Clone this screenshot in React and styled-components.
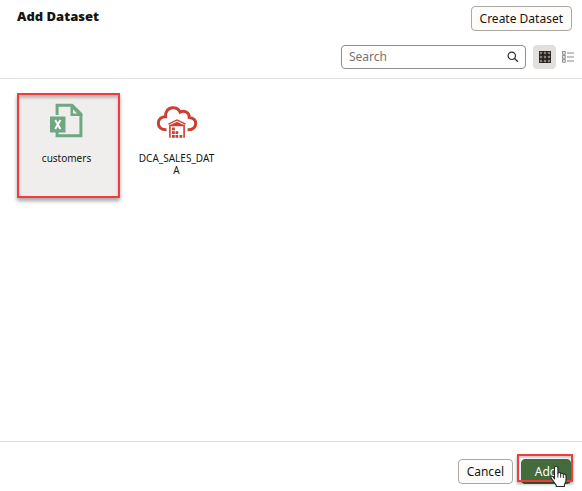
import React, { useState } from "react";
import styled, { createGlobalStyle } from "styled-components";

const GlobalStyle = createGlobalStyle`
  * { box-sizing: border-box; }
  body { margin: 0; background: #fff; }
  body, button, input {
    font-family: "Noto Sans", "Open Sans", sans-serif;
    font-size: 12px;
    line-height: 16px;
    color: #161513;
  }
`;

const Dialog = styled.main`
  display: flex;
  flex-direction: column;
  min-height: 100vh;
`;

const Header = styled.header`
  display: flex;
  justify-content: space-between;
  align-items: flex-start;
  padding: 6px 10px 0 17px;
`;

const Title = styled.h1`
  margin: 1px 0 0;
  font-size: 13px;
  line-height: 18px;
  font-weight: 900;
`;

const Button = styled.button`
  height: 25px;
  padding: 0 8px;
  border: 1px solid ${(p) => (p.$primary ? "#436b3b" : "#aba8a3")};
  border-radius: 4px;
  background: ${(p) => (p.$primary ? "#436b3b" : "#fdfcfb")};
  color: ${(p) => (p.$primary ? "#fff" : "#161513")};
  min-width: ${(p) => (p.$primary ? "50px" : "0")};
  white-space: nowrap;
  cursor: pointer;
`;

const Toolbar = styled.div`
  display: flex;
  justify-content: flex-end;
  align-items: center;
  padding: 14px 3px 9px 17px;
  border-bottom: 1px solid #e4e2e0;
`;

const SearchField = styled.label`
  display: flex;
  align-items: center;
  flex: 0 1 185px;
  min-width: 0;
  height: 24px;
  padding: 0 6px 0 7px;
  margin-right: 7px;
  border: 1px solid #908e8b;
  border-radius: 4px;
`;

const SearchInput = styled.input`
  flex: 1;
  min-width: 0;
  padding: 0;
  border: 0;
  outline: 0;
  background: transparent;
  &::placeholder { color: #77736f; opacity: 1; }
`;

const ViewToggle = styled.button`
  display: grid;
  place-items: center;
  width: 23px;
  height: 24px;
  padding: 0;
  border: 0;
  border-radius: 4px;
  background: ${(p) => (p["aria-pressed"] ? "#e2dfdc" : "transparent")};
  cursor: pointer;
`;

const Datasets = styled.section`
  display: flex;
  flex-wrap: wrap;
  align-items: flex-start;
  gap: 7px;
  flex: 1;
  padding: 14px 17px;
`;

const Tile = styled.button`
  display: flex;
  flex-direction: column;
  align-items: center;
  width: 103px;
  height: 105px;
  padding: 8px 10px 0 6px;
  border: 2px solid ${(p) => (p.$marked ? "#f03c3c" : "transparent")};
  background: ${(p) => (p.$marked ? "#efeeec" : "transparent")};
  box-shadow: ${(p) =>
    p.$marked ? "0 3px 4px rgba(0,0,0,.35), inset 0 3px 3px rgba(0,0,0,.22)" : "none"};
  cursor: pointer;
`;

const TileName = styled.span`
  width: 81px;
  margin-top: 13px;
  font-size: 10px;
  line-height: 12px;
  text-align: center;
  overflow-wrap: anywhere;
`;

const Footer = styled.footer`
  display: flex;
  justify-content: flex-end;
  align-items: flex-start;
  gap: 8px;
  padding: 17px 11px 7px;
  border-top: 1px solid #dedcda;
`;

const MarkedAction = styled.div`
  position: relative;
`;

const Highlight = styled.span`
  position: absolute;
  inset: -5px -2px 2px -4px;
  border: 2px solid #f03c3c;
  box-shadow: 0 2px 3px rgba(0, 0, 0, 0.35), inset 0 2px 2px rgba(0, 0, 0, 0.2);
  pointer-events: none;
`;

const Pointer = styled.svg`
  position: absolute;
  left: 29px;
  top: 6px;
  pointer-events: none;
`;

const SearchIcon = () => (
  <svg width="12" height="12" viewBox="0 0 12 12" fill="none" stroke="#302e2b" aria-hidden="true">
    <circle cx="4.8" cy="4.8" r="3.7" strokeWidth="1.2" />
    <path d="M7.5 7.5l3.4 3.2" strokeWidth="1.3" />
  </svg>
);

const GridIcon = () => (
  <svg width="12" height="12" viewBox="0 0 12 12" aria-hidden="true">
    {[0, 4, 8].map((y) =>
      [0, 4, 8].map((x) => (
        <g key={`${x}-${y}`}>
          <rect x={x + 0.4} y={y + 0.4} width="3.2" height="3.2" fill="none" stroke="#24211f" strokeWidth="1" />
          <rect x={x + 1} y={y + 1} width="2" height="2" fill="#85817c" />
        </g>
      ))
    )}
  </svg>
);

const ListIcon = () => (
  <svg width="12" height="12" viewBox="0 0 12 12" fill="none" stroke="#8b8885" aria-hidden="true">
    {[0, 4, 8].map((y) => (
      <g key={y}>
        <rect x="0.6" y={y + 0.6} width="2.6" height="2.6" />
        <path d={`M5 ${y + 2}h7`} />
      </g>
    ))}
  </svg>
);

const SpreadsheetIcon = () => (
  <svg width="34" height="36" viewBox="0 0 34 36" aria-hidden="true">
    <path d="M7.1 12V2.3h14.6l9.2 9.2v21.2H7.1V27" fill="none" stroke="#6fa783" strokeWidth="3" />
    <path d="M20.5 1h2.3L32.4 10.6v2.3H20.5z" fill="#6fa783" />
    <path d="M23 6.2l4.2 4.2H23z" fill="#efeeec" />
    <path d="M0 13.5h15.5v16H0z" fill="#6fa783" />
    <path d="M5.2 17l5.2 9M10.4 17l-5.2 9" stroke="#fff" strokeWidth="2" />
  </svg>
);

const WarehouseIcon = () => (
  <svg width="42" height="36" viewBox="0 0 42 36" fill="none" aria-hidden="true">
    <path
      d="M10.5 26.8C5.5 27 2.3 24.2 2.3 20.2c0-4.1 3.2-6.6 7.3-6.5-.5-4.6 2.1-8.6 7-8.9 3.7-.2 6.2 1.5 7.5 4.3 3.9-2.3 9.5.2 9.1 5.3 4.2.2 6.5 2.9 6.5 6.2 0 3.9-3.2 6.3-8.1 6.2"
      stroke="#cb4032"
      strokeWidth="3"
    />
    <path d="M12.4 21.2L21 16.9l8.6 4.3" stroke="#cb4032" strokeWidth="1.3" />
    <path d="M14.3 21.9L21 18.7l6.7 3.2z" fill="#cb4032" />
    <path d="M13.9 34.8V22.5h14.2v12.3" stroke="#cb4032" strokeWidth="1.6" />
    {[[16, 24.5], [16, 28.2], [16, 32], [19.5, 28.2], [19.5, 32], [23.5, 32]].map(([x, y]) => (
      <rect key={`${x}-${y}`} x={x} y={y} width="2.8" height="2.8" fill="#cb4032" />
    ))}
  </svg>
);

const HandPointer = () => (
  <Pointer width="17" height="23" viewBox="0 0 17 23" aria-hidden="true">
    <path
      d="M4.5 14V3.1c0-2.5 3.4-2.5 3.4 0v5c.8-1 2.5-.7 2.8.5.9-.8 2.3-.4 2.6.8 1-.7 2.7-.1 2.7 1.4v4.4c0 2-1.6 3.3-1.6 5.1v1.2H6.2v-1.3c-1.4-1.8-2.7-3.8-4-5.7-.9-1.4-1.8-2.3-1.3-3.1.8-1.2 2.5.3 3.6 2.6z"
      fill="#fff"
      stroke="#25282a"
      strokeWidth="1.1"
      strokeLinejoin="round"
    />
    <path d="M7.9 8v4.5M10.7 8.7v4M13.3 9.5v3.5" stroke="#25282a" />
  </Pointer>
);

export default function App() {
  const [view, setView] = useState("grid");
  return (
    <>
      <GlobalStyle />
      <Dialog>
        <Header>
          <Title>Add Dataset</Title>
          <Button type="button">Create Dataset</Button>
        </Header>
        <Toolbar>
          <SearchField>
            <SearchInput type="text" placeholder="Search" aria-label="Search" />
            <SearchIcon />
          </SearchField>
          <ViewToggle type="button" aria-label="Grid view" aria-pressed={view === "grid"} onClick={() => setView("grid")}>
            <GridIcon />
          </ViewToggle>
          <ViewToggle type="button" aria-label="List view" aria-pressed={view === "list"} onClick={() => setView("list")}>
            <ListIcon />
          </ViewToggle>
        </Toolbar>
        <Datasets>
          <Tile type="button" $marked>
            <SpreadsheetIcon />
            <TileName>customers</TileName>
          </Tile>
          <Tile type="button">
            <WarehouseIcon />
            <TileName>DCA_SALES_DATA</TileName>
          </Tile>
        </Datasets>
        <Footer>
          <Button type="button">Cancel</Button>
          <MarkedAction>
            <Button type="button" $primary>Add</Button>
            <Highlight />
            <HandPointer />
          </MarkedAction>
        </Footer>
      </Dialog>
    </>
  );
}
